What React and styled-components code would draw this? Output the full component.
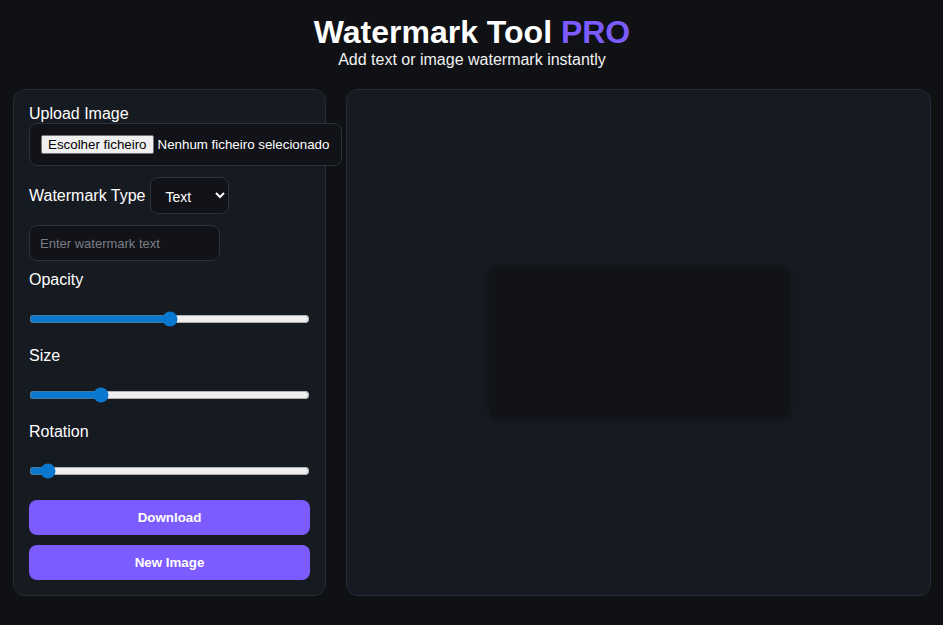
import React, { useState } from "react";
import styled, { createGlobalStyle } from "styled-components";

const GlobalStyle = createGlobalStyle`
  body {
    margin: 0;
    background: #0f1115;
    color: #fff;
    font-family: "Liberation Sans", Arial, sans-serif;
  }
`;

const App = () => {
  const [type, setType] = useState("text");
  const [opacity, setOpacity] = useState(50);
  const [size, setSize] = useState(24);
  const [rotation, setRotation] = useState(4);

  return (
    <Page>
      <GlobalStyle />
      <Header>
        <Title>
          Watermark Tool <Accent>PRO</Accent>
        </Title>
        <Subtitle>Add text or image watermark instantly</Subtitle>
      </Header>
      <Layout>
        <Controls>
          <Label>Upload Image</Label>
          <FileBox>
            <HiddenInput type="file" accept="image/*" />
            <FileButton>Escolher ficheiro</FileButton>
            <FileName>Nenhum ficheiro selecionado</FileName>
          </FileBox>

          <TypeRow>
            <InlineLabel>Watermark Type</InlineLabel>
            <Select value={type} onChange={(e) => setType(e.target.value)}>
              <option value="text">Text</option>
              <option value="image">Image</option>
            </Select>
          </TypeRow>

          <TextInput type="text" placeholder="Enter watermark text" />

          <Label>Opacity</Label>
          <Range
            type="range"
            min="0"
            max="100"
            value={opacity}
            onChange={(e) => setOpacity(e.target.value)}
          />
          <Label>Size</Label>
          <Range
            type="range"
            min="0"
            max="100"
            value={size}
            onChange={(e) => setSize(e.target.value)}
          />
          <Label>Rotation</Label>
          <Range
            type="range"
            min="0"
            max="100"
            value={rotation}
            onChange={(e) => setRotation(e.target.value)}
          />

          <Actions>
            <Button>Download</Button>
            <Button>New Image</Button>
          </Actions>
        </Controls>

        <Preview>
          <Canvas width="300" height="150" />
        </Preview>
      </Layout>
    </Page>
  );
};

const Page = styled.div`
  padding: 14px 12px 29px 13px;
`;

const Header = styled.header`
  text-align: center;
`;

const Title = styled.h1`
  margin: 0;
  font-size: 32px;
  font-weight: 700;
  line-height: 37px;
`;

const Accent = styled.span`
  color: #7c5cff;
`;

const Subtitle = styled.p`
  margin: 0;
  font-size: 16px;
  line-height: 18px;
  color: #f1f1f3;
`;

const Layout = styled.main`
  margin-top: 20px;
  display: grid;
  grid-template-columns: 313px 1fr;
  gap: 20px;
`;

const Controls = styled.section`
  background: #161a21;
  border: 1px solid #262b34;
  border-radius: 12px;
  padding: 15px;
`;

const Label = styled.label`
  display: block;
  font-size: 16px;
  line-height: 18px;
  margin-top: 10px;
  &:first-child {
    margin-top: 0;
  }
`;

const FileBox = styled.label`
  display: inline-flex;
  align-items: center;
  width: max-content;
  padding: 11px 12px 11px 11px;
  background: #111318;
  border: 1px solid #2c313b;
  border-radius: 8px;
  font-size: 13.33px;
  cursor: pointer;
`;

const HiddenInput = styled.input`
  display: none;
`;

const FileButton = styled.span`
  background: #efefef;
  color: #000;
  border: 1px solid #767676;
  border-radius: 2px;
  padding: 1px 6px;
  line-height: 15px;
`;

const FileName = styled.span`
  margin-left: 4px;
  color: #fff;
`;

const TypeRow = styled.div`
  display: flex;
  align-items: center;
  gap: 5px;
  margin-top: 11px;
`;

const InlineLabel = styled.span`
  font-size: 16px;
`;

const Select = styled.select`
  background: #111318;
  color: #fff;
  border: 1px solid #2c313b;
  border-radius: 8px;
  padding: 10px;
  width: 79px;
  height: 37px;
  font-family: "Liberation Sans", Arial, sans-serif;
  font-size: 14px;
`;

const TextInput = styled.input`
  display: block;
  margin-top: 11px;
  width: 191px;
  box-sizing: border-box;
  height: 36px;
  padding: 10px;
  background: #111318;
  color: #fff;
  border: 1px solid #2c313b;
  border-radius: 8px;
  font-family: "Liberation Sans", Arial, sans-serif;
  font-size: 13px;
  &::placeholder {
    color: #7a7d84;
  }
`;

const Range = styled.input`
  display: block;
  width: 100%;
  margin: 22px 0 20px;
  accent-color: #0b78d0;
`;

const Actions = styled.div`
  display: flex;
  flex-direction: column;
  gap: 10px;
  margin-top: 21px;
`;

const Button = styled.button`
  height: 35px;
  border: none;
  border-radius: 8px;
  background: #7c5cff;
  color: #fff;
  font-family: "Liberation Sans", Arial, sans-serif;
  font-size: 13.33px;
  font-weight: 700;
  cursor: pointer;
`;

const Preview = styled.section`
  background: #171a22;
  border: 1px solid #262b34;
  border-radius: 12px;
  display: flex;
  align-items: center;
  justify-content: center;
`;

const Canvas = styled.canvas`
  width: 300px;
  height: 150px;
  background: #111317;
  border-radius: 8px;
  box-shadow: 0 0 8px rgba(0, 0, 0, 0.35);
`;

export default App;
